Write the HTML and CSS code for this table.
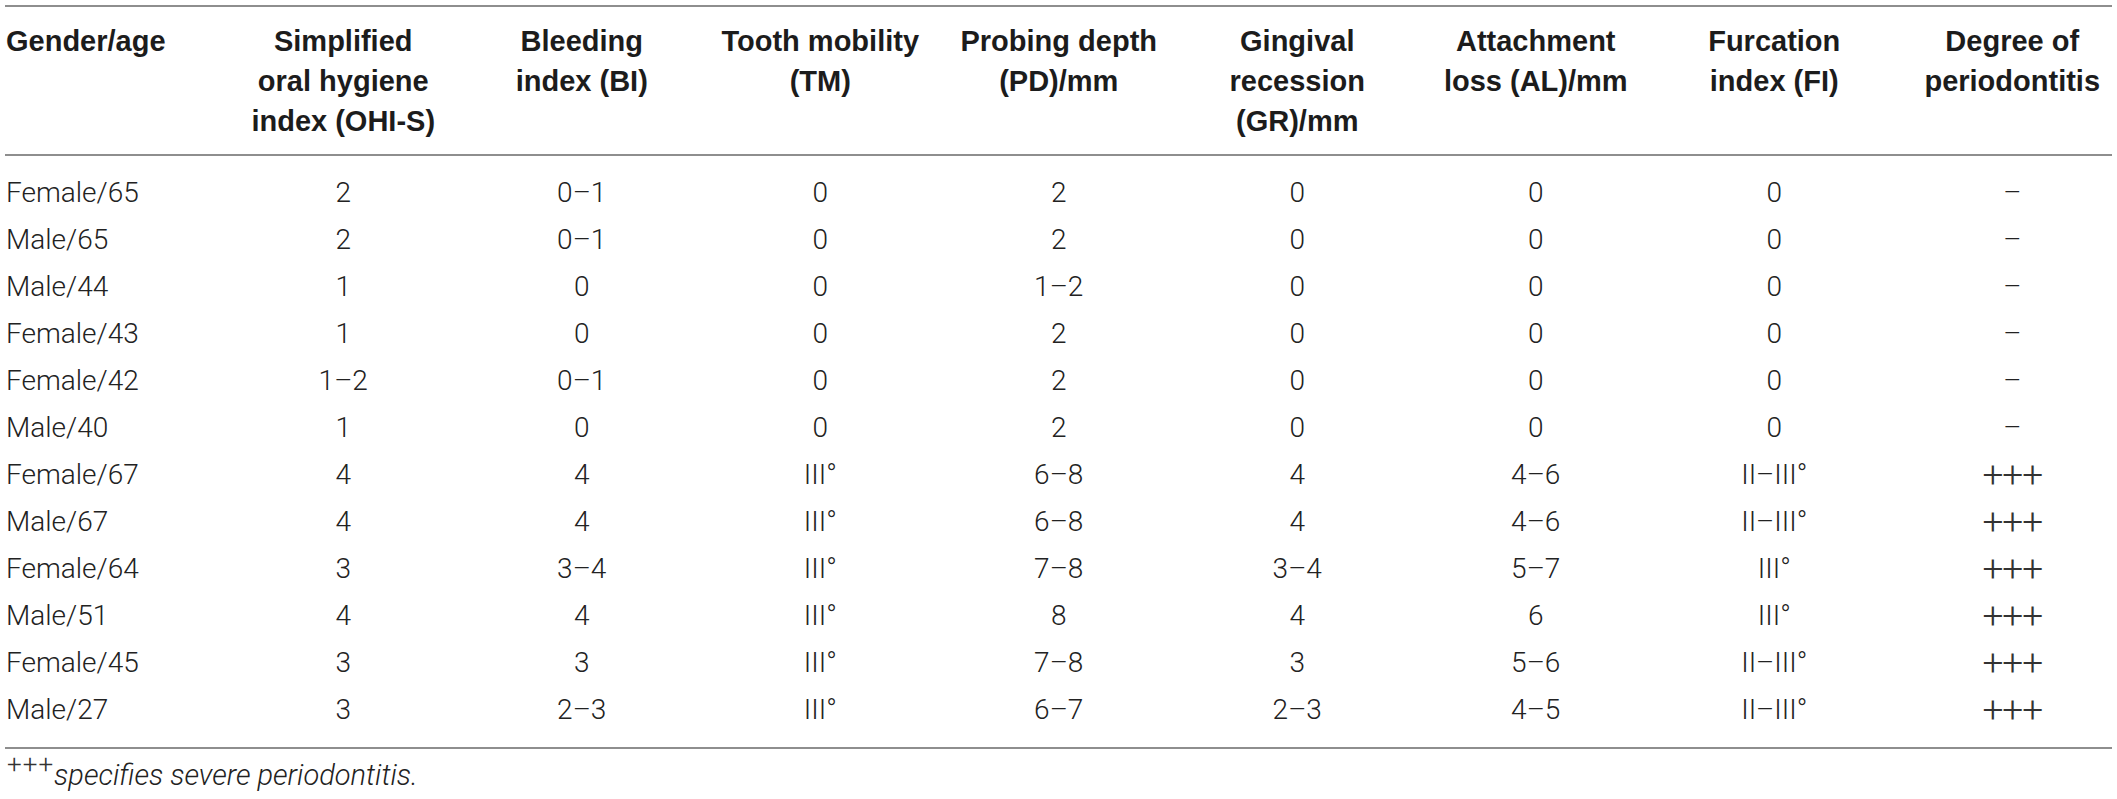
FILE: index.html
```html
<!DOCTYPE html>
<html>
<head>
    <title>Periodontal status of the subjects</title>
    <link rel="stylesheet" href="styles.css">
</head>
<body>
    <table class="data-table">
        <colgroup>
            <col class="col-subject">
            <col class="col-value">
            <col class="col-value">
            <col class="col-value">
            <col class="col-value">
            <col class="col-value">
            <col class="col-value">
            <col class="col-value">
            <col class="col-degree">
        </colgroup>
        <thead>
            <tr>
                <th class="subject">Gender/age</th>
                <th>Simplified<br>oral hygiene<br>index (OHI-S)</th>
                <th>Bleeding<br>index (BI)</th>
                <th>Tooth mobility<br>(TM)</th>
                <th>Probing depth<br>(PD)/mm</th>
                <th>Gingival<br>recession<br>(GR)/mm</th>
                <th>Attachment<br>loss (AL)/mm</th>
                <th>Furcation<br>index (FI)</th>
                <th class="degree">Degree of<br>periodontitis</th>
            </tr>
        </thead>
        <tbody>
            <tr><td class="subject">Female/65</td><td>2</td><td>0–1</td><td>0</td><td>2</td><td>0</td><td>0</td><td>0</td><td class="degree">–</td></tr>
            <tr><td class="subject">Male/65</td><td>2</td><td>0–1</td><td>0</td><td>2</td><td>0</td><td>0</td><td>0</td><td class="degree">–</td></tr>
            <tr><td class="subject">Male/44</td><td>1</td><td>0</td><td>0</td><td>1–2</td><td>0</td><td>0</td><td>0</td><td class="degree">–</td></tr>
            <tr><td class="subject">Female/43</td><td>1</td><td>0</td><td>0</td><td>2</td><td>0</td><td>0</td><td>0</td><td class="degree">–</td></tr>
            <tr><td class="subject">Female/42</td><td>1–2</td><td>0–1</td><td>0</td><td>2</td><td>0</td><td>0</td><td>0</td><td class="degree">–</td></tr>
            <tr><td class="subject">Male/40</td><td>1</td><td>0</td><td>0</td><td>2</td><td>0</td><td>0</td><td>0</td><td class="degree">–</td></tr>
            <tr><td class="subject">Female/67</td><td>4</td><td>4</td><td>III°</td><td>6–8</td><td>4</td><td>4–6</td><td>II–III°</td><td class="degree"><span class="severe">+++</span></td></tr>
            <tr><td class="subject">Male/67</td><td>4</td><td>4</td><td>III°</td><td>6–8</td><td>4</td><td>4–6</td><td>II–III°</td><td class="degree"><span class="severe">+++</span></td></tr>
            <tr><td class="subject">Female/64</td><td>3</td><td>3–4</td><td>III°</td><td>7–8</td><td>3–4</td><td>5–7</td><td>III°</td><td class="degree"><span class="severe">+++</span></td></tr>
            <tr><td class="subject">Male/51</td><td>4</td><td>4</td><td>III°</td><td>8</td><td>4</td><td>6</td><td>III°</td><td class="degree"><span class="severe">+++</span></td></tr>
            <tr><td class="subject">Female/45</td><td>3</td><td>3</td><td>III°</td><td>7–8</td><td>3</td><td>5–6</td><td>II–III°</td><td class="degree"><span class="severe">+++</span></td></tr>
            <tr><td class="subject">Male/27</td><td>3</td><td>2–3</td><td>III°</td><td>6–7</td><td>2–3</td><td>4–5</td><td>II–III°</td><td class="degree"><span class="severe">+++</span></td></tr>
        </tbody>
    </table>

    <p class="footnote"><sup>+++</sup><em>specifies severe periodontitis.</em></p>
</body>
</html>
```

FILE: styles.css
```css
body {
    margin: 0;
    padding: 5px 5px 0;
    background: #fff;
    color: #222;
    font-family: Roboto, "Liberation Sans", Arial, sans-serif;
    font-weight: 300;
}
.data-table {
    width: 2107px;
    border-collapse: collapse;
    table-layout: fixed;
}
.col-subject { width: 219px; }
.col-value { width: 238.5px; }
.col-degree { width: 218.5px; }
thead th {
    font-family: "Liberation Sans", Arial, Helvetica, sans-serif;
    font-size: 29px;
    line-height: 40px;
    font-weight: 700;
    color: #1c1c1c;
    text-align: center;
    vertical-align: top;
    padding: 14px 0 13px;
    border-top: 2px solid #8e8e8e;
    border-bottom: 2px solid #8e8e8e;
}
tbody td {
    font-size: 28px;
    line-height: 47px;
    padding: 0;
    text-align: center;
    white-space: nowrap;
}
tbody tr:first-child td { padding-top: 13px; }
tbody tr:last-child td {
    padding-bottom: 14px;
    border-bottom: 2px solid #8e8e8e;
}
.data-table .subject {
    text-align: left;
    padding-left: 1px;
}
.data-table .degree { padding-left: 19px; }
.severe {
    font-size: 37px;
    line-height: 0;
    letter-spacing: -1px;
    vertical-align: -3px;
    color: #333;
}
.footnote {
    margin: 0;
    padding-top: 6px;
    padding-left: 2px;
    font-size: 29px;
    line-height: 40px;
}
.footnote sup {
    font-size: 26px;
    line-height: 0;
    letter-spacing: 1px;
    vertical-align: 12px;
    color: #333;
}
```
